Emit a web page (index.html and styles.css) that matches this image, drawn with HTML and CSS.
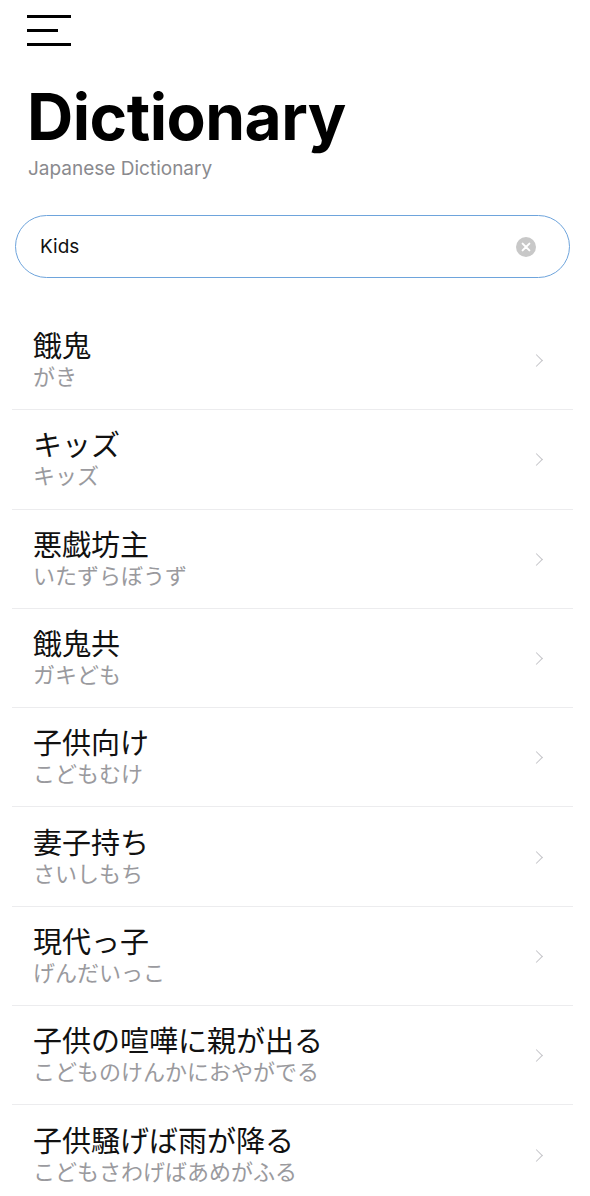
FILE: index.html
```html
<!DOCTYPE html>
<html lang="ja">
<head>
    <meta charset="UTF-8">
    <meta name="viewport" content="width=device-width, initial-scale=1.0">
    <title>Dictionary</title>
    <link rel="stylesheet" href="styles.css">
</head>
<body>
    <div class="page">
        <header class="header">
            <button class="menu-btn" aria-label="Menu">
                <span class="bar"></span>
                <span class="bar short"></span>
                <span class="bar"></span>
            </button>
            <h1 class="title">Dictionary</h1>
            <p class="subtitle">Japanese Dictionary</p>
        </header>

        <div class="search">
            <span class="search-text">Kids</span>
            <span class="clear">
                <svg width="20" height="20" viewBox="0 0 20 20">
                    <circle cx="10" cy="10" r="10" fill="#c8c8c8"/>
                    <path d="M6.6 6.6 L13.4 13.4 M13.4 6.6 L6.6 13.4" stroke="#fff" stroke-width="2" stroke-linecap="round"/>
                </svg>
            </span>
        </div>

        <ul class="results">
            <li class="row">
                <div class="word"><span class="kanji">餓鬼</span><span class="reading">がき</span></div>
                <span class="chevron"></span>
            </li>
            <li class="row">
                <div class="word"><span class="kanji">キッズ</span><span class="reading">キッズ</span></div>
                <span class="chevron"></span>
            </li>
            <li class="row">
                <div class="word"><span class="kanji">悪戯坊主</span><span class="reading">いたずらぼうず</span></div>
                <span class="chevron"></span>
            </li>
            <li class="row">
                <div class="word"><span class="kanji">餓鬼共</span><span class="reading">ガキども</span></div>
                <span class="chevron"></span>
            </li>
            <li class="row">
                <div class="word"><span class="kanji">子供向け</span><span class="reading">こどもむけ</span></div>
                <span class="chevron"></span>
            </li>
            <li class="row">
                <div class="word"><span class="kanji">妻子持ち</span><span class="reading">さいしもち</span></div>
                <span class="chevron"></span>
            </li>
            <li class="row">
                <div class="word"><span class="kanji">現代っ子</span><span class="reading">げんだいっこ</span></div>
                <span class="chevron"></span>
            </li>
            <li class="row">
                <div class="word"><span class="kanji">子供の喧嘩に親が出る</span><span class="reading">こどものけんかにおやがでる</span></div>
                <span class="chevron"></span>
            </li>
            <li class="row">
                <div class="word"><span class="kanji">子供騒げば雨が降る</span><span class="reading">こどもさわげばあめがふる</span></div>
                <span class="chevron"></span>
            </li>
        </ul>
    </div>
</body>
</html>
```

FILE: styles.css
```css
body {
    margin: 0;
    padding: 0;
    background-color: #fff;
    font-family: Inter, "Noto Sans CJK JP", sans-serif;
    color: #000;
}

.page {
    height: 1196px;
    overflow: hidden;
}

.header {
    padding: 15px 27px 0 27px;
}

.menu-btn {
    display: flex;
    flex-direction: column;
    gap: 11px;
    padding: 0;
    border: none;
    background: none;
    width: 44px;
}

.bar {
    display: block;
    width: 44px;
    height: 3px;
    background-color: #000;
}

.bar.short {
    width: 31px;
}

.title {
    margin: 32px 0 0 0;
    font-size: 64px;
    font-weight: 700;
    letter-spacing: -0.5px;
    line-height: 78px;
}

.subtitle {
    margin: 1px 0 0 1px;
    font-size: 19px;
    color: #8a8a8e;
    line-height: 24px;
}

.search {
    display: flex;
    align-items: center;
    justify-content: space-between;
    height: 63px;
    box-sizing: border-box;
    margin: 34px 20px 0 15px;
    padding: 0 33px 0 24px;
    border: 1.5px solid #6ea4dc;
    border-radius: 32px;
}

.search-text {
    font-size: 19px;
    color: #111;
}

.clear {
    display: flex;
}

.results {
    list-style: none;
    margin: 33px 17px 0 12px;
    padding: 0;
}

.row {
    display: flex;
    align-items: center;
    justify-content: space-between;
    height: 99.3px;
    box-sizing: border-box;
    padding: 1px 30px 0 21px;
    border-bottom: 1.5px solid #ececee;
}

.word {
    display: flex;
    flex-direction: column;
}

.kanji {
    font-size: 29px;
    line-height: 34px;
    color: #111;
}

.reading {
    font-size: 22px;
    line-height: 27px;
    color: #9a9a9e;
}

.chevron {
    width: 8px;
    height: 8px;
    border-top: 1.5px solid #c4c4c8;
    border-right: 1.5px solid #c4c4c8;
    transform: rotate(45deg);
    margin-right: 2px;
}
```
